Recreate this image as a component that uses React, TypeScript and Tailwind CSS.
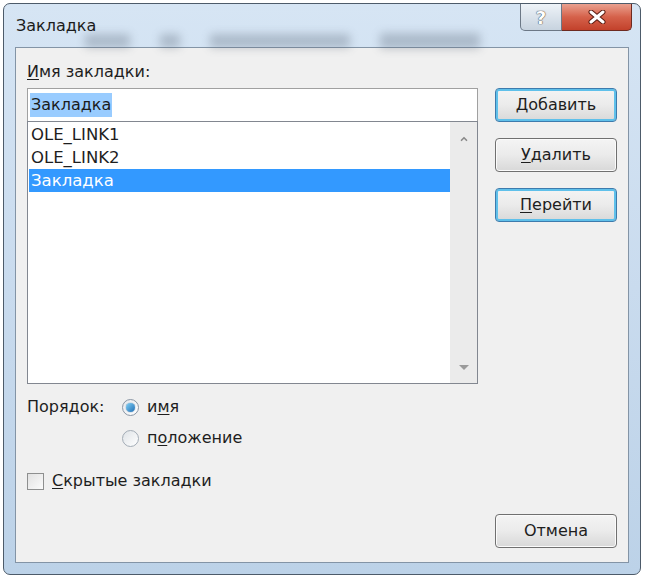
import { ChevronUp } from "lucide-react";

const font = { fontFamily: '"DejaVu Sans", "Noto Sans", sans-serif' };

function Btn({ label, u, blue }: { label: string; u?: boolean; blue?: boolean }) {
  const first = label.slice(0, 1);
  const rest = label.slice(1);
  return (
    <button
      className={`h-[34px] w-[122px] rounded-[4px] border text-[16px] text-[#1e1e1e] bg-gradient-to-b from-[#f4f4f4] via-[#ebebeb] to-[#d8d8d8] ${
        blue
          ? "border-[#3d7bad] shadow-[inset_0_0_0_2px_#5fc0ea]"
          : "border-[#707070] shadow-[inset_0_0_0_1px_#fbfbfb]"
      }`}
    >
      {u ? <span className="underline underline-offset-2">{first}</span> : first}
      {rest}
    </button>
  );
}

export default function App() {
  return (
    <div className="w-[645px] h-[578px] bg-white p-[3px]" style={font}>
      <div className="h-[572px] w-[638px] rounded-[7px] border border-[#4d5b6a] bg-gradient-to-b from-[#d6e5f4] via-[#c9dbee] to-[#bcd2e8] flex flex-col px-[11px] pb-[11px]">
        {/* title bar */}
        <div className="relative h-[43px] flex items-start justify-between">
          {/* blurred glass backdrop */}
          <div className="absolute left-[70px] right-[90px] top-[29px] flex items-center gap-[30px] blur-[5px] opacity-30">
            <div className="w-[45px] h-[14px] bg-[#4f5c6c]" />
            <div className="w-[20px] h-[14px] bg-[#4f5c6c]" />
            <div className="w-[140px] h-[14px] bg-[#4f5c6c]" />
            <div className="w-[100px] h-[16px] bg-[#4f5c6c]" />
          </div>
          <span className="relative mt-[10px] ml-[1px] text-[16px] text-[#1b1b1b]">Закладка</span>
          <div className="relative flex -mr-[3px]">
            <div className="w-[42px] h-[27px] rounded-bl-[5px] border border-t-0 border-[#6c7886] bg-gradient-to-b from-[#eef3f8] to-[#c7d3df] flex items-center justify-center text-[18px] font-bold text-white [text-shadow:0_0_1px_#333,0_0_1px_#333]">
              ?
            </div>
            <div className="w-[70px] h-[27px] rounded-br-[5px] border border-t-0 border-l-0 border-[#6d2a20] bg-gradient-to-b from-[#e9a08f] via-[#d5614a] to-[#c2412b] flex items-center justify-center">
              <svg width="18" height="14" viewBox="0 0 18 14">
                <path d="M3 2 L15 12 M15 2 L3 12" stroke="#5a1a10" strokeWidth="5" strokeLinecap="round" />
                <path d="M3 2 L15 12 M15 2 L3 12" stroke="#ffffff" strokeWidth="3" strokeLinecap="round" />
              </svg>
            </div>
          </div>
        </div>

        {/* client area */}
        <div className="flex-1 border border-[#8394a6] bg-[#f0f0f0] flex px-[11px] pt-[14px] pb-[14px] text-[#1e1e1e]">
          <div className="w-[451px] flex flex-col">
            <div className="text-[16px] leading-[20px]">
              <span className="underline underline-offset-2">И</span>мя закладки:
            </div>
            <div className="mt-[6px] h-[34px] border border-[#a0a0a0] bg-white flex items-center px-[2px]">
              <span className="bg-[#3399ff]/50 text-[16px] leading-[24px] px-[1px] text-[#1b1b1b]">Закладка</span>
            </div>
            <div className="h-[263px] -mt-px border border-[#828790] bg-white flex">
              <div className="flex-1 pt-[1px] flex flex-col text-[16.5px] leading-[23px] pl-[1px]">
                <div className="px-[2px]">OLE_LINK1</div>
                <div className="px-[2px]">OLE_LINK2</div>
                <div className="px-[2px] bg-[#3399ff] text-white">Закладка</div>
              </div>
              <div className="w-[27px] bg-[#ebebeb] flex flex-col items-center justify-between py-[12px]">
                <ChevronUp className="w-[14px] h-[10px] text-[#8a8a8a]" strokeWidth={4} />
                <svg width="12" height="7" viewBox="0 0 12 7">
                  <path d="M1 1 L11 1 L6 6 Z" fill="#9a9a9a" />
                </svg>
              </div>
            </div>

            <div className="mt-[12px] flex items-center text-[16px] leading-[22px]">
              <span className="w-[95px]">Порядок:</span>
              <span className="w-[17px] h-[17px] rounded-full border border-[#8a96a4] bg-gradient-to-br from-[#e4e8ec] to-[#ffffff] flex items-center justify-center">
                <span className="w-[9px] h-[9px] rounded-full bg-gradient-to-br from-[#7fd0f5] to-[#1f6fb5] shadow-[0_0_1px_#0b4a80]" />
              </span>
              <span className="ml-[8px]">
                и<span className="underline underline-offset-2">м</span>я
              </span>
            </div>
            <div className="mt-[9px] flex items-center text-[16px] leading-[22px] pl-[95px]">
              <span className="w-[17px] h-[17px] rounded-full border border-[#a3acb6] bg-gradient-to-br from-[#dfe3e7] to-[#ffffff]" />
              <span className="ml-[8px]">
                п<span className="underline underline-offset-2">о</span>ложение
              </span>
            </div>
            <div className="mt-[21px] flex items-center text-[16px] leading-[22px]">
              <span className="w-[17px] h-[17px] border border-[#8e8f8f] bg-gradient-to-br from-[#e2e2e2] to-[#fbfbfb]" />
              <span className="ml-[8px]">
                <span className="underline underline-offset-2">С</span>крытые закладки
              </span>
            </div>
          </div>

          <div className="ml-[17px] flex flex-col">
            <div className="mt-[26px] flex flex-col gap-[16px]">
              <Btn label="Добавить" u blue />
              <Btn label="Удалить" u />
              <Btn label="Перейти" u blue />
            </div>
            <div className="mt-auto">
              <Btn label="Отмена" />
            </div>
          </div>
        </div>
      </div>
    </div>
  );
}
